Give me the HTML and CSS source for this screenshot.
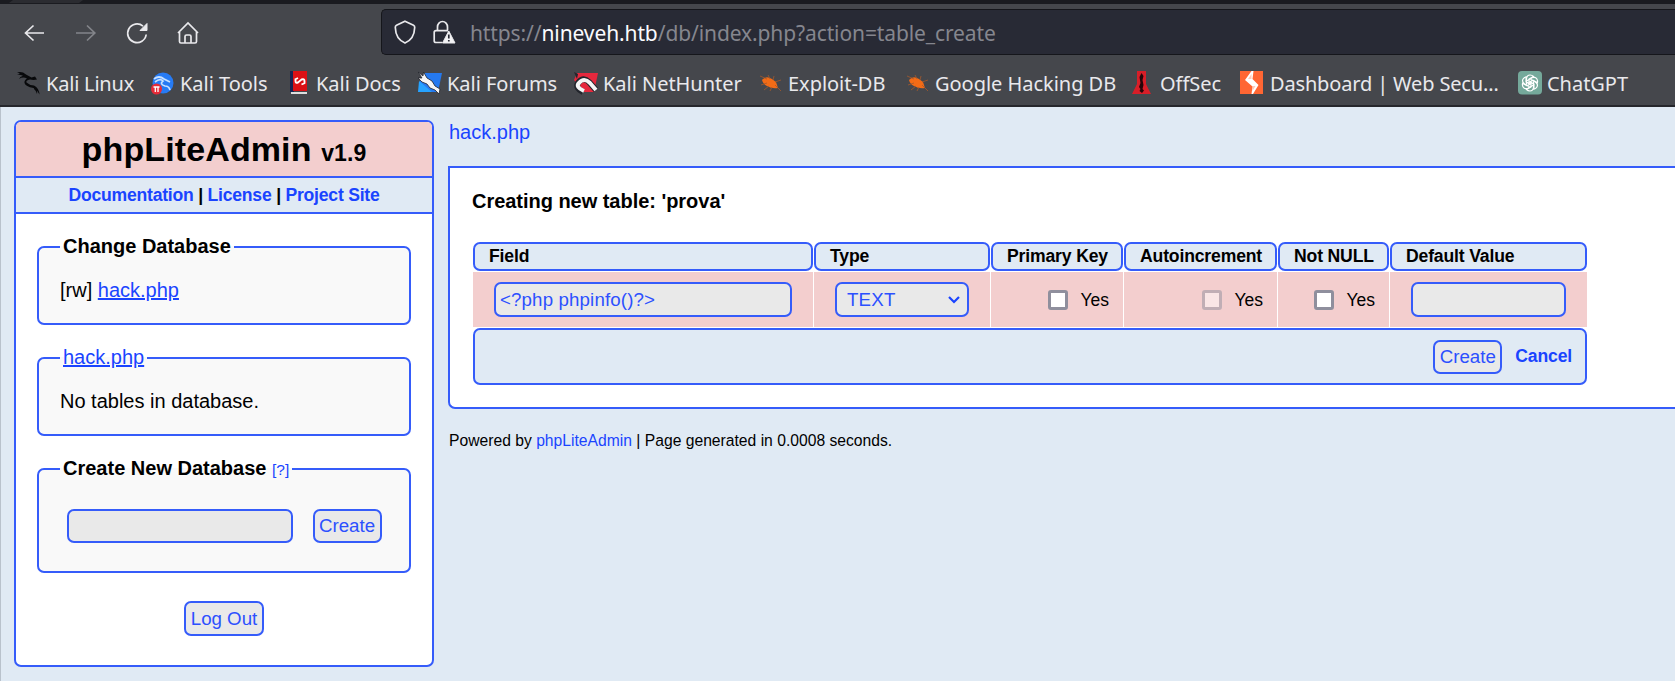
FILE: index.html
```html
<!DOCTYPE html>
<html lang="en">
<head>
<meta charset="utf-8">
<title>phpLiteAdmin</title>
<link rel="stylesheet" href="styles.css">
</head>
<body>
<header class="chrome">
  <div class="tabs-edge"><svg width="110" height="4"><path d="M13 0H83L79 3H9Z" fill="#2b2c31"/></svg></div>
  <div class="toolbar">
    <div class="nav">
      <svg width="24" height="24" viewBox="0 0 24 24"><path d="M21 12H2M10.500 4.500L2.500 12L10.500 19.500"/></svg>
      <svg class="dim" width="24" height="24" viewBox="0 0 24 24"><path d="M2 12H21M13 4.500L20.800 12L13 19.500"/></svg>
      <svg width="24" height="24" viewBox="0 0 24 24"><path d="M18 5.200A9.300 9.300 0 1 0 21.200 13.500"/><path d="M22 2.500V9.500H15Z" fill="#e9e9ec" stroke-width="1"/></svg>
      <svg width="24" height="24" viewBox="0 0 24 24"><path d="M2 12L12 2L22 12M3.500 10.500V20.500Q3.500 22 5 22H19Q20.500 22 20.500 20.500V10.500M9 22V15.500Q9 14 10.500 14H13.500Q15 14 15 15.500V22"/></svg>
    </div>
    <div class="urlbar">
      <svg width="24" height="26" viewBox="0 0 24 26"><path d="M12 2.200L20.500 6.300Q21.800 7 21.700 8.500C21.500 15.500 18 21.500 12 24C6 21.500 2.500 15.500 2.300 8.500Q2.200 7 3.500 6.300Z"/></svg>
      <svg width="24" height="26" viewBox="0 0 24 26"><path d="M5.500 11.500V8A5 5.500 0 0 1 15.500 8V11.500M10 23.500H4Q2.200 23.500 2.200 21.700V13.500Q2.200 11.700 4 11.700H16"/><path d="M16.800 12L23 24H10.500Z" fill="#f3f3f5" stroke-width="1"/><path d="M16.800 15.500V19.500M16.800 21V22.500" stroke="#282a35" stroke-width="1.700"/></svg>
      <span class="url">https://<b>nineveh.htb</b>/db/index.php?action=table_create</span>
    </div>
  </div>
  <nav class="bookmarks">
    <a><svg viewBox="0 0 24 24"><path d="M0 1.500Q5 0 9 3.500L14.500 6.500L18 5.500L20 8.500L16.500 9L13 8.500Q8.500 9.500 9.500 11.500Q12 14 17 14.500Q22 17 22.500 23.500Q20 19 16.500 17Q8.500 15.500 7.500 12Q7 9.500 10 7.500Q6 5.500 2 8Q3 5.500 6 4.800Q3 3.500 0 4L3 2.500ZM17 17Q21 19 20 23Q19.500 20 17 18Z" fill="#08090b"/></svg><span>Kali Linux</span></a>
    <a><svg viewBox="0 0 24 24"><circle cx="12" cy="12" r="10.500" fill="#267bf5"/><path d="M3 8Q8 4 13 8L19 11M4 11Q9 7 12 10Q8 13 14 15Q18 15 19 19" stroke="#c8e1ff" stroke-width="1.700" fill="none"/><circle cx="5.500" cy="18" r="5.500" fill="#e52b38"/><path d="M2.500 16H8.500M4.300 16V21M7 16V21" stroke="#fff" stroke-width="1.300"/></svg><span>Kali Tools</span></a>
    <a><svg viewBox="0 0 24 24"><path d="M3 0H7V21H3Z" fill="#172452"/><path d="M6 0H20V20H6Z" fill="#db1015"/><path d="M4 22H20" stroke="#dedede" stroke-width="2"/><path d="M8.500 7.500V10Q8.500 12.500 11 11.500L14.500 8.500Q17.500 7.500 17.500 10V12.500M11 7L8 8.500M18 12L14.500 13.500" stroke="#fff" stroke-width="1.900" fill="none"/></svg><span>Kali Docs</span></a>
    <a><svg viewBox="0 0 24 24"><path d="M7 2H24L20 21H1L2 8Z" fill="#2579ef"/><path d="M1 10L14 21H0Z" fill="#26a3ff"/><path d="M0 1L5 5L5.500 1L9 7L14 10L17 15L22 18L21 23L17 19L12 17L9 13L4 11L0 7L4 7Z" fill="#f6f6f6" stroke="#22252c" stroke-width=".8"/></svg><span>Kali Forums</span></a>
    <a><svg viewBox="0 0 24 24"><path d="M3 2H24L20 21H10L0 9Z" fill="#e5283d"/><path d="M9 21Q1 17 4 12Q9 5 15 11L22 19" fill="none" stroke="#22252c" stroke-width="6"/><path d="M10 20Q1 16 5 12Q10 6 16 12L22 19" fill="none" stroke="#f5f5f5" stroke-width="4"/><path d="M0 1L4 3L3 8Z" fill="#22252c"/></svg><span>Kali NetHunter</span></a>
    <a><svg viewBox="0 0 24 24"><path d="M3 9Q7 4 13 8L17 11L19 17Q13 18 8 15Q4 13 3 9Z" fill="#f36b16"/><path d="M1 5L8 8M9 4L11 8M15 5L14 9M22 9L16 11M2 14L8 12M5 19L10 15M11 20L13 16M22 20L16 14" stroke="#a5592c" stroke-width=".8"/></svg><span>Exploit-DB</span></a>
    <a><svg viewBox="0 0 24 24"><path d="M3 9Q7 4 13 8L17 11L19 17Q13 18 8 15Q4 13 3 9Z" fill="#f36b16"/><path d="M1 5L8 8M9 4L11 8M15 5L14 9M22 9L16 11M2 14L8 12M5 19L10 15M11 20L13 16M22 20L16 14" stroke="#a5592c" stroke-width=".8"/></svg><span>Google Hacking DB</span></a>
    <a><svg viewBox="0 0 24 24"><path d="M6 0H15V13L20 23H1L6 13Z" fill="#d81e28"/><path d="M10.500 2L12.500 5L11.500 9L12.500 14L11.500 18L13 19.500L11 22L8.500 20L9.500 18L8 16L9.500 12L8.500 6Z" fill="#25060a"/></svg><span>OffSec</span></a>
    <a class="wide"><svg viewBox="0 0 24 24"><path d="M0 0H23V23H0Z" fill="#ff6633"/><path d="M11.500 0H13.500L12.500 8L18.500 14L13 23H11.500L12.500 15.500L5 9Z" fill="#fff"/><path d="M11.500 3V8H8ZM12.500 20V15H15.500Z" fill="#ff6633" opacity=".35"/></svg><span>Dashboard | Web Secu…</span></a>
    <a><svg viewBox="0 0 24 24"><rect width="24" height="23.500" rx="4" fill="#75a99b"/><g fill="none" stroke="#fff" stroke-width="1.200" transform="translate(12 12)"><path id="petal" d="M-3.500 1.500V-4.500Q-3 -8 0 -8Q2 -8 3.500 -6.500L-1 -4V1"/><use href="#petal" transform="rotate(60)"/><use href="#petal" transform="rotate(120)"/><use href="#petal" transform="rotate(180)"/><use href="#petal" transform="rotate(240)"/><use href="#petal" transform="rotate(300)"/></g></svg><span>ChatGPT</span></a>
  </nav>
</header>
<div class="page">
  <aside class="sidebar">
    <h1>phpLiteAdmin <small>v1.9</small></h1>
    <div class="links"><a>Documentation</a> | <a>License</a> | <a>Project Site</a></div>
    <section class="box databases"><div class="legend"><b>Change Database</b></div><p>[rw] <a class="under">hack.php</a></p></section>
    <section class="box tables"><div class="legend"><a class="under">hack.php</a></div><p>No tables in database.</p></section>
    <section class="box create"><div class="legend"><b>Create New Database</b> <a class="help">[?]</a></div>
      <div class="form"><div class="field"></div><button>Create</button></div></section>
    <button class="logout">Log Out</button>
  </aside>
  <main class="content">
    <div class="crumb"><a>hack.php</a></div>
    <section class="panel">
      <h2>Creating new table: 'prova'</h2>
      <div class="grid">
        <div class="th">Field</div><div class="th">Type</div><div class="th">Primary Key</div><div class="th">Autoincrement</div><div class="th">Not NULL</div><div class="th">Default Value</div>
        <div class="td"><div class="field">&lt;?php phpinfo()?&gt;</div></div>
        <div class="td"><div class="field select">TEXT<svg width="14" height="10" viewBox="0 0 14 10"><path d="M2 2L7 7L12 2"/></svg></div></div>
        <div class="td check"><i></i>Yes</div>
        <div class="td check"><i class="off"></i>Yes</div>
        <div class="td check"><i></i>Yes</div>
        <div class="td"><div class="field"></div></div>
        <div class="actions"><button>Create</button><a>Cancel</a></div>
      </div>
    </section>
    <footer>Powered by <a>phpLiteAdmin</a> | Page generated in 0.0008 seconds.</footer>
  </main>
</div>
</body>
</html>
```
FILE: styles.css
```css
* { box-sizing: border-box; }
body { margin: 0; width: 1675px; height: 681px; overflow: hidden; background: #e0eaf4; color: #000; font: 20px "Liberation Sans", Arial, sans-serif; white-space: nowrap; }
a { color: #1a44ff; }
h1, h2, p { margin: 0; }

/* Browser chrome */
.chrome { height: 107px; background: #45474c; border-bottom: 2px solid #26272c; font-family: "Noto Sans", sans-serif; }
.tabs-edge { height: 4px; background: #1a1b20; }
.tabs-edge svg { display: block; }
.toolbar { display: flex; height: 56px; padding-top: 5px; }
.nav { display: flex; gap: 27px; width: 381px; padding: 12px 0 0 23px; }
.toolbar svg { fill: none; stroke: #e9e9ec; stroke-width: 1.7; flex: none; }
.toolbar .dim { stroke: #83858a; }
.urlbar { flex: 1; display: flex; align-items: center; height: 46px; padding-left: 11px; background: #282a35; border: 1px solid #15161b; border-right: 0; border-radius: 5px 0 0 5px; }
.urlbar svg + svg { margin-left: 15px; }
.url { margin-left: 14px; padding-top: 2px; color: #85868e; font-size: 21px; letter-spacing: -.11px; }
.url b { color: #fbfbfe; font-weight: 400; }
.bookmarks { display: grid; grid-template-columns: 134px 136px 131px 156px 185px 147px 225px 109px 278px 130px; padding-left: 17px; height: 46px; align-items: center; }
.bookmarks a { display: flex; align-items: center; gap: 5px; color: #e9e9ec; font-size: 20px; letter-spacing: -.03px; }
.bookmarks .wide { gap: 6px; letter-spacing: -.16px; }
.bookmarks a:first-child { letter-spacing: -.2px; }
.bookmarks svg { width: 24px; height: 24px; flex: none; }

/* Page */
.page { display: flex; align-items: flex-start; gap: 14px; height: 574px; padding: 13px 0 0 13px; border-left: 1px solid #b9c2cc; }
.sidebar { width: 420px; height: 547px; background: #fff; border: 2px solid #355cfa; border-radius: 7px; display: flex; flex-direction: column; align-items: center; }
.sidebar h1 { width: 100%; height: 56px; line-height: 54px; background: #f3cece; border-bottom: 2px solid #355cfa; border-radius: 5px 5px 0 0; text-align: center; font-size: 34px; letter-spacing: .12px; }
.sidebar small { font-size: 23px; }
.links { width: 100%; height: 36px; line-height: 34px; text-align: center; background: #e0eaf4; border-bottom: 2px solid #355cfa; font-size: 17.600px; font-weight: 700; letter-spacing: -.23px; }
.box { width: 374px; border: 2px solid #355cfa; border-radius: 7px; background: #f9f9f9; padding-left: 21px; }
.legend { width: max-content; height: 24px; line-height: 24px; margin-top: -14px; padding: 0 3px; background: linear-gradient(#fff 0 12px, #f9f9f9 12px); }
.box p { margin-top: 20px; line-height: 25px; }
.databases { margin-top: 32px; height: 79px; }
.tables { margin-top: 32px; height: 79px; }
.create { margin-top: 32px; height: 105px; }
.under { text-decoration: underline; }
.help { font-size: 15.500px; }
.form { display: flex; gap: 19.500px; margin: 29px 0 0 7px; }
.form .field { width: 226px; }
button, .field { height: 34px; border: 2px solid #355cfa; border-radius: 7px; background: #e9e9e9; color: #2c50ff; font: 18.700px "Liberation Sans", Arial, sans-serif; }
button { width: 69px; padding: 0; flex: none; }
.logout { width: 80px; margin-top: 28px; height: 35px; }

.content { flex: 1; padding-top: 1px; }
.crumb { height: 45px; line-height: 23px; padding-left: 1px; }
.panel { height: 243px; border: 2px solid #355cfa; border-right: 0; border-radius: 0 0 0 7px; background: #fff; padding: 21px 0 0 22px; }
h2 { font-size: 20px; line-height: 24px; letter-spacing: -.03px; }
.grid { display: grid; grid-template-columns: 340px 176px 132px 153px 111px 197px; grid-template-rows: 29px 55px 57px; gap: 1px; margin: 29px 0 0 1px; width: 1114px; }
.th { border: 2px solid #355cfa; border-radius: 7px; background: #e0eaf4; padding-left: 14px; font-size: 17.600px; font-weight: 700; line-height: 25px; letter-spacing: -.16px; }
.td { background: #f3cece; padding: 10px 21px; }
.td .field { height: 35px; line-height: 31px; padding-left: 4px; letter-spacing: .14px; }
.select.field { display: flex; justify-content: space-between; padding: 0 6px 0 10px; letter-spacing: .2px; }
.select svg { align-self: center; fill: none; stroke: #1a44ff; stroke-width: 2.200; }
.check { display: flex; justify-content: flex-end; align-items: center; gap: 12px; padding: 1px 14px 0 0; font-size: 17.500px; }
.check i { width: 20px; height: 20px; background: #fff; border: 3px solid #8f8f9d; border-radius: 3px; }
.check .off { opacity: .5; }
.actions { grid-column: 1 / -1; display: flex; justify-content: flex-end; align-items: center; gap: 13px; padding-right: 13px; border: 2px solid #355cfa; border-radius: 7px; background: #e0eaf4; font-size: 17.600px; font-weight: 700; letter-spacing: -.16px; }
footer { margin-top: 23px; font-size: 15.680px; line-height: 18px; padding-left: 1px; }
```
